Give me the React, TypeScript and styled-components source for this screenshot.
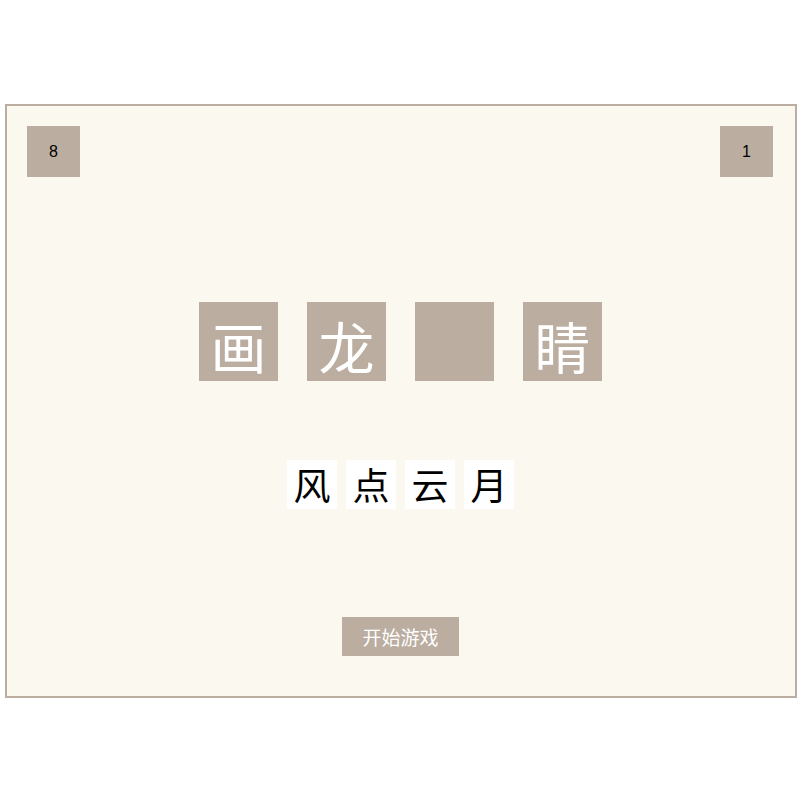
import React from 'react';
import styled, { createGlobalStyle } from 'styled-components';

const GlobalStyle = createGlobalStyle`
  html, body {
    margin: 0;
    padding: 0;
    background: #ffffff;
  }
  body {
    font-family: "Liberation Sans", "Noto Sans CJK SC", sans-serif;
  }
`;

const Page = styled.div`
  padding: 104px 0 0 5px;
`;

const Board = styled.div`
  box-sizing: border-box;
  width: 792px;
  height: 594px;
  border: 2px solid #bbada0;
  background: #fbf8ef;
  display: flex;
  flex-direction: column;
  align-items: center;
`;

const ScoreBar = styled.div`
  align-self: stretch;
  display: flex;
  justify-content: space-between;
  padding: 20px 22px 0 20px;
`;

const ScoreBox = styled.div`
  width: 53px;
  height: 51px;
  background: #bbada0;
  color: #000000;
  font-family: "Liberation Sans", Arial, sans-serif;
  font-size: 16px;
  display: flex;
  align-items: center;
  justify-content: center;
`;

const Row = styled.div<{ $gap: number; $top: number }>`
  display: flex;
  gap: ${p => p.$gap}px;
  margin-top: ${p => p.$top}px;
  margin-right: 1px;
`;

const IdiomTile = styled.div`
  width: 79px;
  height: 79px;
  background: #bbada0;
  color: #ffffff;
  font-family: "Noto Sans CJK SC", sans-serif;
  font-size: 56px;
  line-height: 1;
  display: flex;
  align-items: center;
  justify-content: center;
  padding-top: 6px;
  box-sizing: border-box;
`;

const Choice = styled.div`
  width: 50px;
  height: 49px;
  background: #ffffff;
  color: #000000;
  font-family: "Noto Sans CJK SC", sans-serif;
  font-size: 37px;
  line-height: 1;
  display: flex;
  align-items: center;
  justify-content: center;
  cursor: pointer;
`;

const StartButton = styled.button`
  margin-top: 108px;
  margin-right: 1px;
  width: 117px;
  height: 39px;
  border: none;
  background: #bbada0;
  color: #ffffff;
  font-family: "Noto Sans CJK SC", sans-serif;
  font-size: 19px;
  padding: 0;
  cursor: pointer;
`;

const idiom = ['画', '龙', '', '睛'];
const choices = ['风', '点', '云', '月'];

export default function App() {
  return (
    <>
      <GlobalStyle />
      <Page>
        <Board>
          <ScoreBar>
            <ScoreBox>8</ScoreBox>
            <ScoreBox>1</ScoreBox>
          </ScoreBar>
          <Row $gap={29} $top={125}>
            {idiom.map((c, i) => (
              <IdiomTile key={i}>{c}</IdiomTile>
            ))}
          </Row>
          <Row $gap={9} $top={79}>
            {choices.map(c => (
              <Choice key={c}>{c}</Choice>
            ))}
          </Row>
          <StartButton>开始游戏</StartButton>
        </Board>
      </Page>
    </>
  );
}
